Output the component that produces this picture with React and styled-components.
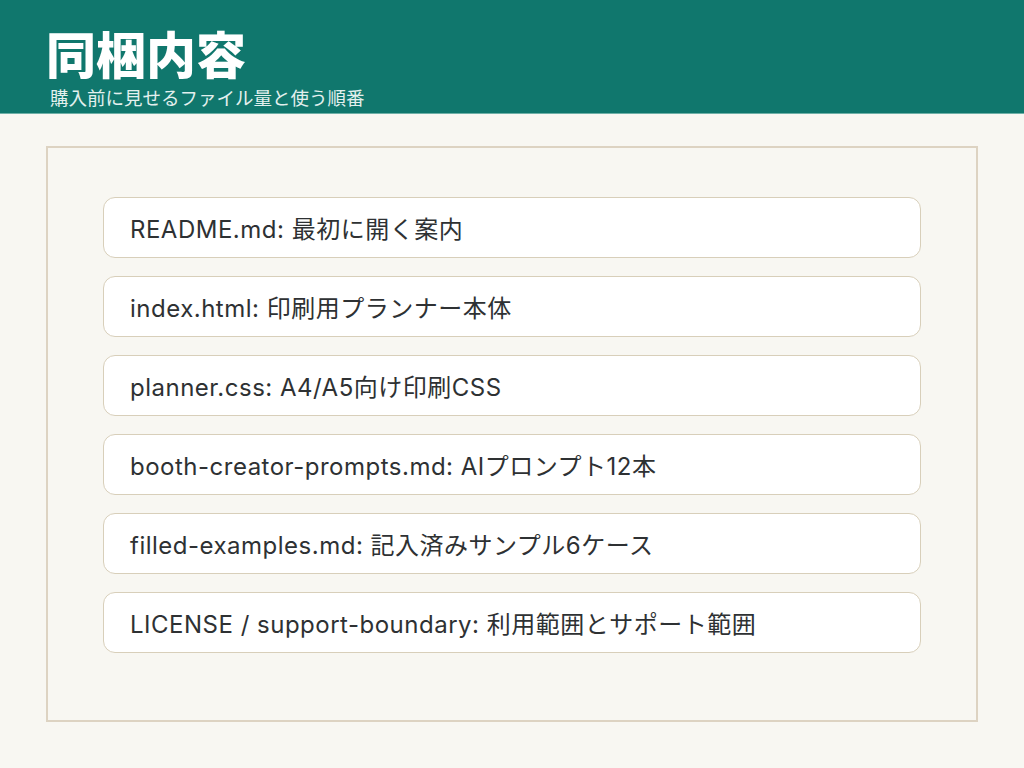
import React from 'react';
import styled, { createGlobalStyle } from 'styled-components';

const GlobalStyle = createGlobalStyle`
  html, body {
    margin: 0;
    padding: 0;
    background: #f8f7f2;
  }
  body {
    font-family: Inter, "Noto Sans CJK JP", sans-serif;
  }
`;

const Page = styled.div`
  width: 1024px;
  height: 768px;
  display: flex;
  flex-direction: column;
  background: #f8f7f2;
`;

const Header = styled.header`
  height: 114px;
  box-sizing: border-box;
  background: #10776d;
  border-bottom: 1px solid #6fb0a7;
  padding: 24px 0 0 46px;
  color: #ffffff;
`;

const Title = styled.h1`
  margin: 0;
  font-family: "Noto Sans CJK JP", sans-serif;
  font-size: 50px;
  font-weight: 900;
  line-height: 56px;
  letter-spacing: 0;
`;

const Subtitle = styled.p`
  margin: 6px 0 0 4px;
  font-family: "Noto Sans CJK JP", sans-serif;
  font-size: 18.5px;
  line-height: 22px;
  color: #e3f0ee;
`;

const Main = styled.main`
  flex: 1;
  display: flex;
  padding: 32px 46px 46px;
`;

const Panel = styled.section`
  flex: 1;
  border: 2px solid #ddd3c2;
  padding: 49px 55px;
  display: flex;
  flex-direction: column;
  gap: 18px;
`;

const Item = styled.div`
  height: 61px;
  box-sizing: border-box;
  display: flex;
  align-items: center;
  padding: 0 26px;
  background: #ffffff;
  border: 1.5px solid #d8cfba;
  border-radius: 12px;
  font-size: 24px;
  letter-spacing: 0.5px;
  color: #2e3133;
`;

const files = [
  'README.md: 最初に開く案内',
  'index.html: 印刷用プランナー本体',
  'planner.css: A4/A5向け印刷CSS',
  'booth-creator-prompts.md: AIプロンプト12本',
  'filled-examples.md: 記入済みサンプル6ケース',
  'LICENSE / support-boundary: 利用範囲とサポート範囲'
];

const App = () => (
  <Page>
    <GlobalStyle />
    <Header>
      <Title>同梱内容</Title>
      <Subtitle>購入前に見せるファイル量と使う順番</Subtitle>
    </Header>
    <Main>
      <Panel>
        {files.map(label => (
          <Item key={label}>{label}</Item>
        ))}
      </Panel>
    </Main>
  </Page>
);

export default App;
